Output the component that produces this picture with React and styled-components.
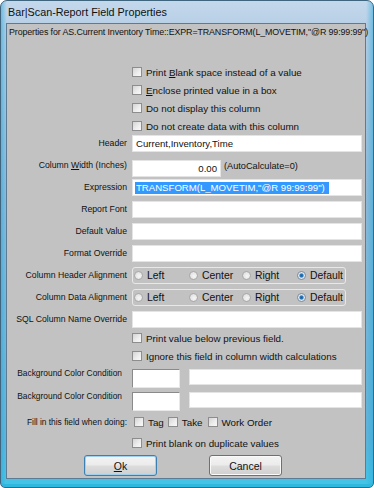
import React from 'react';
import styled, { createGlobalStyle } from 'styled-components';

const GlobalStyle = createGlobalStyle`
  html, body {
    margin: 0;
    padding: 0;
    background: #ffffff;
  }
  body {
    font-family: "Liberation Sans", Arial, sans-serif;
    color: #111;
  }
`;

const Window = styled.div`
  width: 374px;
  height: 488px;
  box-sizing: border-box;
  display: flex;
  flex-direction: column;
  padding: 0 7px 8px 5px;
  border-radius: 7px 7px 5px 5px;
  border: 1px solid #40657f;
  background:
    linear-gradient(90deg, rgba(40, 170, 220, 0.55) 0, rgba(120, 190, 225, 0.15) 5px, rgba(0, 0, 0, 0) 6px),
    linear-gradient(270deg, rgba(40, 170, 220, 0.5) 0, rgba(0, 0, 0, 0) 7px),
    linear-gradient(180deg, #c4d8ec 0, #b4cde4 30px, #8fb9d8 200px, #5fb3d8 440px, #3ec6e8 488px);
  box-shadow: inset 0 -3px 0 #2fb8dd;
`;

const TitleBar = styled.div`
  height: 22px;
  flex: none;
  display: flex;
  align-items: center;
  padding-left: 2px;
  font-size: 10.8px;
  color: #101010;
`;

const Client = styled.div`
  flex: 1;
  border: 1px solid #5d7b93;
  background: #c2c2c2;
  display: flex;
  flex-direction: column;
`;

const Caption = styled.div`
  height: 14px;
  padding: 1px 0 0 2px;
  font-size: 8.9px;
  line-height: 14px;
  white-space: nowrap;
  letter-spacing: -0.12px;
`;

const Form = styled.div`
  margin-top: 24px;
  padding-right: 3px;
  display: flex;
  flex-direction: column;
`;

const Row = styled.div`
  display: grid;
  grid-template-columns: 120px 1fr;
  column-gap: 5px;
  align-items: center;
  height: ${(p) => p.h ?? 22}px;
  margin-top: ${(p) => p.mt ?? 0}px;
`;

const Label = styled.div`
  text-align: right;
  font-size: ${(p) => (p.small ? 8.4 : 8.7)}px;
  white-space: nowrap;
  align-self: ${(p) => (p.top ? 'start' : 'center')};
  padding-top: ${(p) => (p.top ? p.pt ?? 3 : 0)}px;
  padding-right: ${(p) => p.pr ?? 0}px;
`;

const Input = styled.div`
  height: 17px;
  box-sizing: border-box;
  background: #ffffff;
  border: 1px solid #e4e4e4;
  font-size: 9.6px;
  line-height: 15px;
  padding: 0 3px;
  white-space: nowrap;
  width: ${(p) => (p.w ? `${p.w}px` : 'auto')};
  text-align: ${(p) => p.align || 'left'};
  align-self: start;
`;

const Selected = styled.span`
  display: inline-block;
  background: #3399ff;
  color: #ffffff;
  line-height: 12px;
  padding: 0 4px 0 1px;
  margin-left: -1px;
`;

const Inline = styled.div`
  display: flex;
  align-items: ${(p) => p.align || 'center'};
  gap: ${(p) => p.gap || 0}px;
  padding-left: ${(p) => p.pl || 0}px;
`;

const Note = styled.span`
  font-size: 9.2px;
  align-self: start;
  padding-top: 1px;
`;

const Check = styled.label`
  display: flex;
  align-items: center;
  font-size: ${(p) => p.fs || 9.8}px;
  white-space: nowrap;
  margin-right: ${(p) => p.mr || 0}px;
`;

const Box = styled.span`
  width: 10px;
  height: 10px;
  box-sizing: border-box;
  border: 1px solid #8d8d8d;
  background: linear-gradient(135deg, #d4d4d4 0%, #eeeeee 60%, #f8f8f8 100%);
  margin-right: 4px;
  flex: none;
`;

const Group = styled.div`
  width: 214px;
  height: 17px;
  box-sizing: border-box;
  border: 1px solid #e8e8e8;
  border-radius: 3px;
  display: grid;
  grid-template-columns: 55px 53px 55px 1fr;
  align-items: center;
  padding-left: 1px;
  align-self: start;
`;

const Radio = styled.span`
  width: 9px;
  height: 9px;
  box-sizing: border-box;
  border-radius: 50%;
  border: 1px solid ${(p) => (p.on ? '#7c8c9c' : '#a8a8a8')};
  background: ${(p) =>
    p.on
      ? 'radial-gradient(circle, #1c5f9e 0, #2f78b8 1.6px, #dfe8f0 2.6px, #f4f4f4 100%)'
      : 'radial-gradient(circle at 60% 60%, #f6f6f6 0, #dadada 100%)'};
  margin-right: 4px;
  flex: none;
`;

const Swatch = styled.div`
  width: 48px;
  height: 19px;
  box-sizing: border-box;
  background: #ffffff;
  border: 1px solid #8a8a8a;
  border-right-color: #e8e8e8;
  border-bottom-color: #e8e8e8;
  flex: none;
`;

const WideBox = styled.div`
  flex: 1;
  height: 16px;
  box-sizing: border-box;
  background: #ffffff;
  border: 1px solid #e4e4e4;
`;

const Buttons = styled.div`
  display: flex;
  gap: 52px;
  padding-left: 77px;
`;

const Button = styled.div`
  width: ${(p) => p.w}px;
  height: 21px;
  box-sizing: border-box;
  border-radius: 3px;
  border: 1px solid ${(p) => (p.primary ? '#3c7fb1' : '#707070')};
  box-shadow: ${(p) => (p.primary ? 'inset 0 0 0 1px #9fd0f0' : 'inset 0 0 0 1px #fafafa')};
  background: linear-gradient(180deg, #f4f4f4 0%, #ebebeb 48%, #dddddd 52%, #cfcfcf 100%);
  display: flex;
  align-items: center;
  justify-content: center;
  font-size: 10.5px;
`;

const U = styled.span`
  text-decoration: underline;
`;

function CheckItem({ children, mr }) {
  return (
    <Check mr={mr}>
      <Box />
      <span>{children}</span>
    </Check>
  );
}

function Alignment() {
  const items = ['Left', 'Center', 'Right', 'Default'];
  return (
    <Group>
      {items.map((t) => (
        <Check key={t} fs={10.4}>
          <Radio on={t === 'Default'} />
          <span>{t}</span>
        </Check>
      ))}
    </Group>
  );
}

function Field({ label, children }) {
  return (
    <Row>
      <Label top>{label}</Label>
      {children}
    </Row>
  );
}

function CheckRow({ h = 18, mt, children }) {
  return (
    <Row h={h} mt={mt}>
      <span />
      <CheckItem>{children}</CheckItem>
    </Row>
  );
}

function ColorRow({ mt }) {
  return (
    <Row h={23} mt={mt}>
      <Label small top pt={1} pr={5}>
        Background Color Condition
      </Label>
      <Inline align="start" gap={9}>
        <Swatch />
        <WideBox />
      </Inline>
    </Row>
  );
}

export default function App() {
  return (
    <>
      <GlobalStyle />
      <Window>
        <TitleBar>Bar|Scan-Report Field Properties</TitleBar>
        <Client>
          <Caption>
            Properties for AS.Current Inventory Time::EXPR=TRANSFORM(L_MOVETIM,"@R 99:99:99")
          </Caption>
          <Form>
            <CheckRow>
              Print <U>B</U>lank space instead of a value
            </CheckRow>
            <CheckRow>
              <U>E</U>nclose printed value in a box
            </CheckRow>
            <CheckRow>Do not display this column</CheckRow>
            <CheckRow>Do not create data with this column</CheckRow>

            <Field label="Header">
              <Input>Current,Inventory,Time</Input>
            </Field>
            <Field
              label={
                <>
                  Column <U>W</U>idth (Inches)
                </>
              }
            >
              <Inline align="start" gap={3}>
                <Input w={89} align="right">
                  0.00
                </Input>
                <Note>(AutoCalculate=0)</Note>
              </Inline>
            </Field>
            <Field label="Expression">
              <Input>
                <Selected>TRANSFORM(L_MOVETIM,"@R 99:99:99")</Selected>
              </Input>
            </Field>
            <Field label="Report Font">
              <Input />
            </Field>
            <Field label="Default Value">
              <Input />
            </Field>
            <Field label="Format Override">
              <Input />
            </Field>
            <Field label="Column Header Alignment">
              <Alignment />
            </Field>
            <Field label="Column Data Alignment">
              <Alignment />
            </Field>
            <Row h={18}>
              <Label top>SQL Column Name Override</Label>
              <Input />
            </Row>

            <CheckRow>Print value below previous field.</CheckRow>
            <CheckRow>Ignore this field in column width calculations</CheckRow>

            <ColorRow mt={2} />
            <ColorRow />

            <Row h={18}>
              <Label small>Fill in this field when doing:</Label>
              <Inline pl={2}>
                <CheckItem mr={4}>Tag</CheckItem>
                <CheckItem mr={5}>Take</CheckItem>
                <CheckItem>Work Order</CheckItem>
              </Inline>
            </Row>
            <CheckRow h={24}>Print blank on duplicate values</CheckRow>
          </Form>
          <Buttons>
            <Button primary w={73}>
              <U>O</U>k
            </Button>
            <Button w={73}>Cancel</Button>
          </Buttons>
        </Client>
      </Window>
    </>
  );
}
